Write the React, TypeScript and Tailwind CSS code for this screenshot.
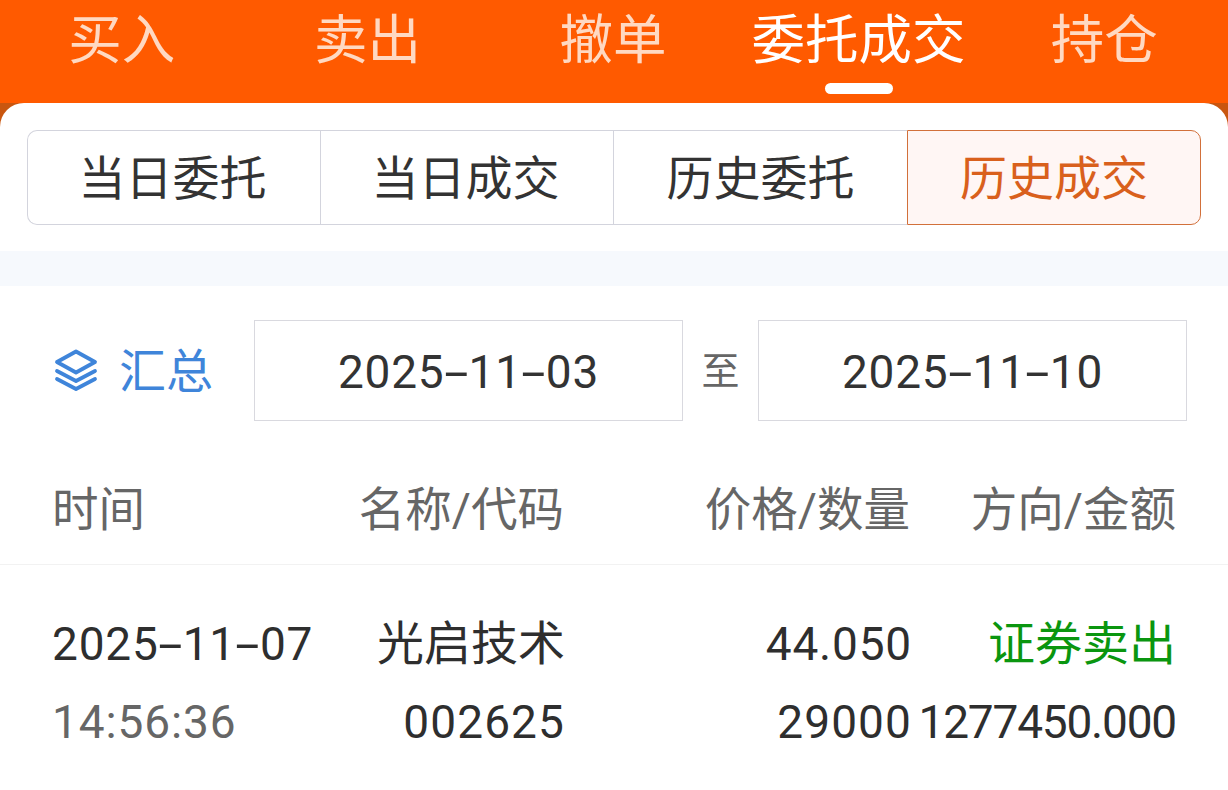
import React from "react";

const FONT = "font-['Roboto','Noto_Sans_CJK_SC',sans-serif]";

const navItems = [
  { label: "买入" },
  { label: "卖出" },
  { label: "撤单" },
  { label: "委托成交", active: true },
  { label: "持仓" },
];

const subTabs = [
  { label: "当日委托", width: "w-[293px]", nudge: "pr-[3px]" },
  { label: "当日成交", width: "w-[293px]", nudge: "pr-[3px]" },
  { label: "历史委托", width: "w-[294px]", nudge: "" },
  { label: "历史成交", width: "w-[294px]", nudge: "" },
];

const LayersIcon = () => (
  <svg width="44" height="44" viewBox="0 0 44 44" fill="none" stroke="#3f85da" strokeWidth="3.8" strokeLinejoin="round" strokeLinecap="round">
    <path d="M22 2.5 41 13 22 23.5 3 13Z" />
    <path d="M3 22 22 32 41 22" />
    <path d="M3 30 22 40 41 30" />
  </svg>
);

// the source font draws a long thin hyphen, so stretch the glyph
const DateText = ({ value }: { value: string }) => {
  const parts = value.split("-");
  return (
    <span className="tracking-[0.8px] whitespace-nowrap">
      {parts.map((part, i) => (
        <React.Fragment key={i}>
          {i > 0 && <span className="inline-block w-[24px] text-center scale-x-[1.9]">-</span>}
          {part}
        </React.Fragment>
      ))}
    </span>
  );
};

const App = () => {
  return (
    <div className={`w-[1228px] h-[790px] overflow-hidden bg-[#c9560f] ${FONT}`}>
      <div className="h-[103px] bg-[#ff5a00] flex">
        {navItems.map((item) => (
          <div key={item.label} className="w-[246px] h-[103px] flex flex-col items-center relative">
            <span
              className={`mt-[10px] -ml-[2px] text-[53.5px] leading-[62px] whitespace-nowrap ${
                item.active ? "text-white" : "text-[#ffd9c2]"
              }`}
            >
              {item.label}
            </span>
            {item.active && (
              <div className="absolute top-[83px] -ml-[2px] w-[68px] h-[11px] rounded-full bg-white" />
            )}
          </div>
        ))}
      </div>

      <div className="h-[687px] bg-white rounded-t-[24px]">
        <div className="pt-[27px] px-[27px]">
          <div className="flex h-[95px] w-[1174px]">
            {subTabs.map((tab, i) => {
              const active = i === 3;
              return (
                <div
                  key={tab.label}
                  className={`${tab.width} ${tab.nudge} flex items-center justify-center pt-[3px] text-[47px] border ${
                    active
                      ? "border-[#d2703a] bg-[#fff6f4] text-[#d9601c] rounded-r-[10px]"
                      : "border-[#d3d4dd] border-r-0 text-[#333333]"
                  } ${i === 0 ? "rounded-l-[10px]" : ""}`}
                >
                  {tab.label}
                </div>
              );
            })}
          </div>
        </div>

        <div className="mt-[26px] h-[35px] bg-[#f6f9fd]" />

        <div className="mt-[34px] flex items-center h-[101px] pl-[54px]">
          <LayersIcon />
          <span className="ml-[21px] w-[94px] pt-[3px] text-[47px] text-[#3f85da] whitespace-nowrap">汇总</span>
          <div className="ml-[41px] w-[429px] h-[101px] pt-[3px] border border-[#d9d9df] flex items-center justify-center text-[46px] text-[#333333]">
            <DateText value="2025-11-03" />
          </div>
          <span className="w-[75px] pt-[2px] text-center text-[38px] text-[#666666]">至</span>
          <div className="w-[429px] h-[101px] pt-[3px] border border-[#d9d9df] flex items-center justify-center text-[46px] text-[#333333]">
            <DateText value="2025-11-10" />
          </div>
        </div>

        <div className="mt-[39px] h-[105px] px-[52px] flex items-start border-b border-[#f2f2f2] text-[46.5px] text-[#666666] leading-[100px]">
          <span className="w-[260px]">时间</span>
          <span className="w-[252px] text-right">名称/代码</span>
          <span className="w-[346px] text-right">价格/数量</span>
          <span className="w-[266px] text-right">方向/金额</span>
        </div>

        <div className="px-[52px] pt-[49px] text-[46px] leading-[60px] text-[#2e2e2e]">
          <div className="flex">
            <span className="w-[260px] whitespace-nowrap"><DateText value="2025-11-07" /></span>
            <span className="w-[253px] text-right text-[47px]">光启技术</span>
            <span className="w-[347px] text-right tracking-[0.8px]">44.050</span>
            <span className="w-[264px] text-right text-[47px] text-[#0a960f]">证券卖出</span>
          </div>
          <div className="flex mt-[18px]">
            <span className="w-[260px] text-[#666666] tracking-[0.9px]">14:56:36</span>
            <span className="w-[253px] text-right tracking-[1.1px]">002625</span>
            <span className="w-[347px] text-right tracking-[1.1px]">29000</span>
            <span className="w-[264px] text-right whitespace-nowrap tracking-[-1.2px]">1277450.000</span>
          </div>
        </div>
      </div>
    </div>
  );
};

export default App;
